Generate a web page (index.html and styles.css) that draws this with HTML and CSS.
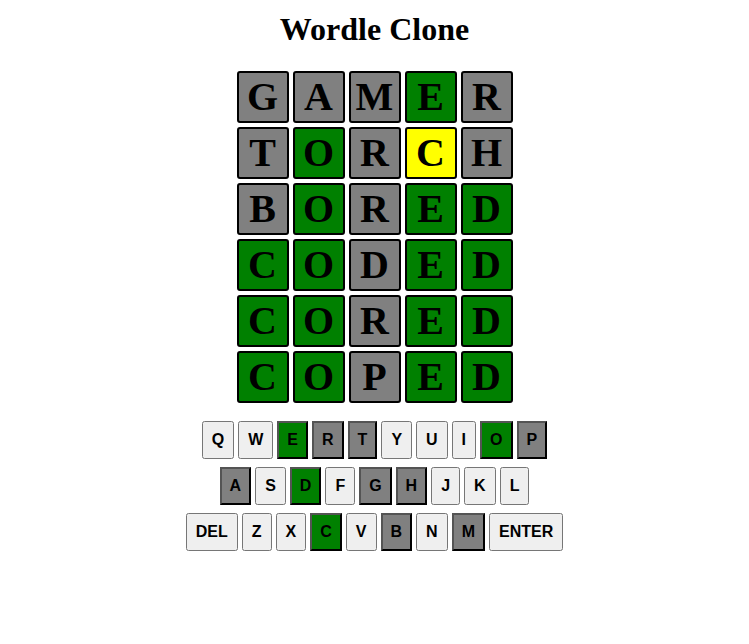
FILE: index.html
```
<!DOCTYPE html>
<html lang="en">
<head>
<meta charset="utf-8">
<title>Wordle Clone</title>
<link rel="stylesheet" href="styles.css">
</head>
<body>
<h1>Wordle Clone</h1>
<main id="board" class="board"></main>
<div id="keyboard" class="keyboard"></div>
<script src="script.js"></script>
</body>
</html>
```
FILE: styles.css
```
body {
  margin: 8px;
  font-family: "Liberation Serif", serif;
  color: #000;
  background: #fff;
}

h1 {
  margin: 0;
  padding: 3px 0;
  font-size: 32px;
  line-height: 36px;
  text-align: center;
}

.board {
  display: flex;
  flex-direction: column;
  align-items: center;
  margin-top: 19px;
}

.row {
  display: flex;
}

.box {
  display: flex;
  align-items: center;
  justify-content: center;
  box-sizing: border-box;
  width: 52px;
  height: 52px;
  margin: 2px;
  border: 2px solid #000;
  border-radius: 3px;
  font-size: 40px;
  font-weight: 700;
  line-height: 44px;
}

.absent {
  background: gray;
}

.correct {
  background: green;
}

.present {
  background: yellow;
}

.keyboard {
  display: flex;
  flex-direction: column;
  align-items: center;
  margin-top: 13px;
}

.keys {
  display: flex;
  margin: 2px 0 4px;
}

.key {
  height: 38px;
  margin: 1px 2px;
  padding: 7px 8px;
  font-family: "Liberation Sans", sans-serif;
  font-size: 16px;
  font-weight: 700;
}

.key.absent {
  background: gray;
}

.key.correct {
  background: green;
}
```
FILE: script.js
```
const guesses = [
  ["GAMER", "aaaca"],
  ["TORCH", "acapa"],
  ["BORED", "acacc"],
  ["CODED", "ccacc"],
  ["CORED", "ccacc"],
  ["COPED", "ccacc"],
];
const states = { a: "absent", c: "correct", p: "present" };

const board = document.getElementById("board");
for (const [word, marks] of guesses) {
  const row = document.createElement("div");
  row.className = "row";
  [...word].forEach((letter, i) => {
    const box = document.createElement("div");
    box.className = "box " + states[marks[i]];
    box.textContent = letter;
    row.append(box);
  });
  board.append(row);
}

const layout = ["Q W E R T Y U I O P", "A S D F G H J K L", "DEL Z X C V B N M ENTER"];
const keyStates = { E: "correct", O: "correct", D: "correct", C: "correct" };
for (const letter of "RTPAGHBM") keyStates[letter] = "absent";

const keyboard = document.getElementById("keyboard");
for (const line of layout) {
  const row = document.createElement("div");
  row.className = "keys";
  for (const name of line.split(" ")) {
    const key = document.createElement("button");
    key.type = "button";
    key.className = "key " + (keyStates[name] || "");
    key.textContent = name;
    row.append(key);
  }
  keyboard.append(row);
}
```
